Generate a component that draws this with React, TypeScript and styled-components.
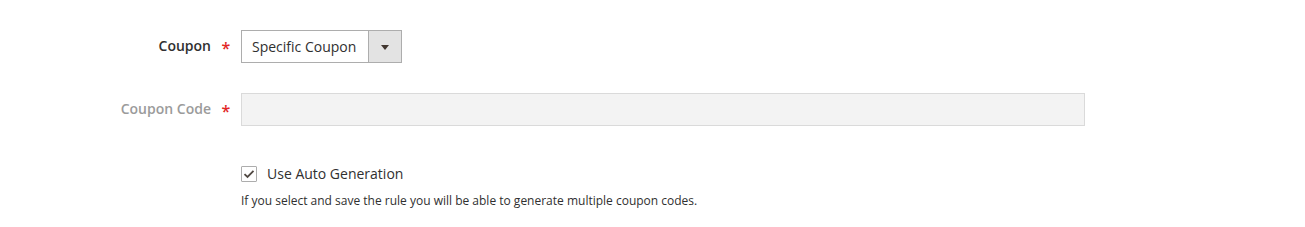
import styled, { createGlobalStyle } from "styled-components";

const GlobalStyle = createGlobalStyle`
  body {
    margin: 0;
    background: #ffffff;
    font-family: "Open Sans", "Liberation Sans", sans-serif;
    color: #303030;
  }
`;

const Form = styled.div`
  display: flex;
  flex-direction: column;
  padding-top: 30px;
  gap: 30px;
`;

const Field = styled.div`
  display: flex;
  align-items: center;
`;

const Label = styled.label<{ $disabled?: boolean }>`
  width: 211px;
  text-align: right;
  font-size: 14px;
  font-weight: 600;
  padding-bottom: 2px;
  color: ${(p) => (p.$disabled ? "#9b9b9b" : "#303030")};
`;

const Required = styled.span`
  width: 30px;
  text-align: center;
  color: #e22626;
  font-size: 16px;
  font-weight: 600;
  line-height: 1;
  padding-top: 2px;
`;

const SelectBox = styled.div`
  display: flex;
  width: 161px;
  height: 33px;
  box-sizing: border-box;
  border: 1px solid #adadad;
  background: #fff;
`;

const SelectValue = styled.div`
  flex: 1;
  display: flex;
  align-items: center;
  padding-left: 10px;
  font-size: 14px;
  color: #303030;
`;

const SelectArrow = styled.div`
  width: 32px;
  border-left: 1px solid #adadad;
  background: #e3e3e3;
  display: flex;
  align-items: center;
  justify-content: center;
`;

const Caret = styled.span`
  width: 0;
  height: 0;
  border-left: 4px solid transparent;
  border-right: 4px solid transparent;
  border-top: 5px solid #41362f;
  margin-top: 1px;
`;

const TextInput = styled.input`
  width: 844px;
  height: 33px;
  box-sizing: border-box;
  border: 1px solid #dadada;
  background: #f3f3f3;
  margin: 0;
  padding: 0 10px;
  font-family: inherit;
  font-size: 14px;
  outline: none;
`;

const Options = styled.div`
  margin-left: 241px;
  margin-top: 38px;
  display: flex;
  flex-direction: column;
  gap: 9px;
`;

const CheckRow = styled.label`
  display: flex;
  align-items: center;
  gap: 10px;
  font-size: 14px;
  color: #303030;
`;

const CheckBox = styled.span`
  width: 16px;
  height: 16px;
  box-sizing: border-box;
  border: 1px solid #adadad;
  border-radius: 1px;
  background: #fff;
  display: flex;
  align-items: center;
  justify-content: center;
`;

const Note = styled.div`
  font-size: 12px;
  color: #303030;
`;

export default function App() {
  return (
    <>
      <GlobalStyle />
      <Form>
        <Field>
          <Label>Coupon</Label>
          <Required>*</Required>
          <SelectBox>
            <SelectValue>Specific Coupon</SelectValue>
            <SelectArrow>
              <Caret />
            </SelectArrow>
          </SelectBox>
        </Field>
        <Field>
          <Label $disabled>Coupon Code</Label>
          <Required>*</Required>
          <TextInput disabled />
        </Field>
      </Form>
      <Options>
        <CheckRow>
          <CheckBox>
            <svg width="12" height="10" viewBox="0 0 12 10">
              <path d="M1.5 5.2 L4.5 8 L10.5 1.8" fill="none" stroke="#514943" strokeWidth="1.8" />
            </svg>
          </CheckBox>
          Use Auto Generation
        </CheckRow>
        <Note>If you select and save the rule you will be able to generate multiple coupon codes.</Note>
      </Options>
    </>
  );
}
